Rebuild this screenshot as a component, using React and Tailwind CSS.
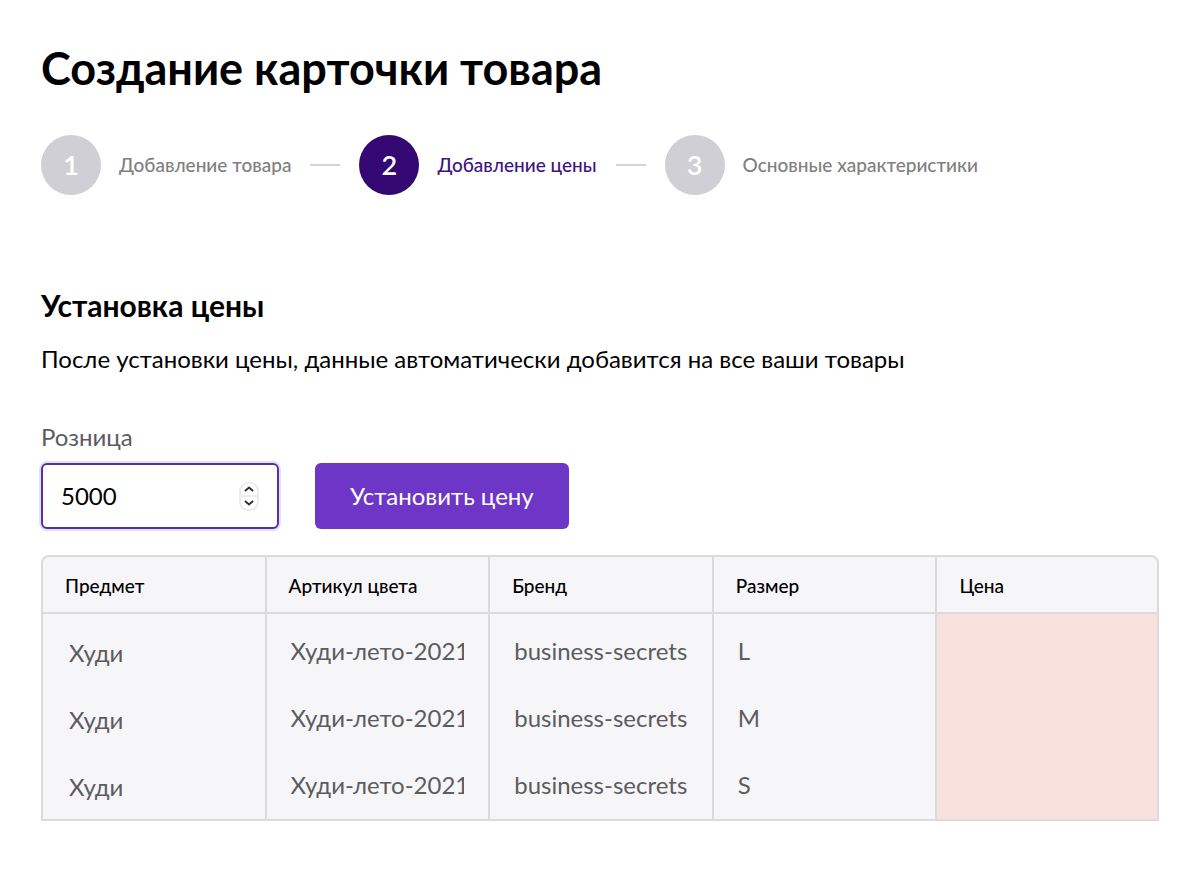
import { useState } from "react";
import clsx from "clsx";

const steps = ["Добавление товара", "Добавление цены", "Основные характеристики"];

const columns = ["Предмет", "Артикул цвета", "Бренд", "Размер", "Цена"];

const products = [
  { subject: "Худи", article: "Худи-лето-2021", brand: "business-secrets", size: "L" },
  { subject: "Худи", article: "Худи-лето-2021", brand: "business-secrets", size: "M" },
  { subject: "Худи", article: "Худи-лето-2021", brand: "business-secrets", size: "S" },
];

export default function App() {
  const [price, setPrice] = useState(5000);

  return (
    <main className="px-[41px] pt-10 pb-14 font-['Lato',sans-serif] text-black">
      <h1 className="text-[45px] leading-[56px] font-bold">Создание карточки товара</h1>

      <Steps active={1} />

      <h2 className="mt-[90px] text-[30px] leading-10 font-bold">Установка цены</h2>
      <p className="mt-[18px] text-2xl leading-8">
        После установки цены, данные автоматически добавится на все ваши товары
      </p>

      <form className="mt-[46px] flex items-end gap-9" onSubmit={(e) => e.preventDefault()}>
        <div className="w-[238px]">
          <label htmlFor="price" className="block text-2xl leading-8 text-[#5c5c5e]">
            Розница
          </label>
          <PriceInput value={price} onChange={setPrice} />
        </div>
        <button
          type="submit"
          className="h-[66px] rounded-md bg-[#6e36c6] px-[35px] text-2xl text-white"
        >
          Установить цену
        </button>
      </form>

      <ProductTable />
    </main>
  );
}

function Steps({ active }) {
  return (
    <ol className="mt-[39px] flex items-center">
      {steps.map((label, i) => (
        <li key={label} className="flex items-center">
          {i > 0 && <span className="mx-[19px] h-0.5 w-[30px] bg-[#d5d5d7]" />}
          <span
            className={clsx(
              "mr-[18px] flex size-[60px] items-center justify-center rounded-full text-[27px] font-semibold text-white",
              i === active ? "bg-[#330872]" : "bg-[#d0cfd6]"
            )}
          >
            {i + 1}
          </span>
          <span
            className={clsx(
              "text-[19px] font-medium",
              i === active ? "text-[#3d1480]" : "text-[#808080]"
            )}
          >
            {label}
          </span>
        </li>
      ))}
    </ol>
  );
}

function PriceInput({ value, onChange }) {
  return (
    <div className="mt-[10px] flex h-[66px] items-center rounded-md border-2 border-[#5b2f9b] bg-white px-[18px] ring-2 ring-[#e1e1fa]">
      <input
        id="price"
        type="number"
        value={value}
        onChange={(e) => onChange(Number(e.target.value))}
        className="w-full min-w-0 flex-1 text-2xl outline-none [appearance:textfield]"
      />
      <div className="flex h-[29px] w-5 flex-col overflow-hidden rounded-[9px] border-2 border-[#ececee]">
        <button
          type="button"
          aria-label="Увеличить"
          onClick={() => onChange(value + 1)}
          className="flex flex-1 items-center justify-center border-b-2 border-[#ececee]"
        >
          <svg viewBox="0 0 10 6" className="w-[10px]" fill="none" stroke="#333" strokeWidth="2">
            <path d="M1 5l4-3.5L9 5" />
          </svg>
        </button>
        <button
          type="button"
          aria-label="Уменьшить"
          onClick={() => onChange(value - 1)}
          className="flex flex-1 items-center justify-center"
        >
          <svg viewBox="0 0 10 6" className="w-[10px]" fill="none" stroke="#333" strokeWidth="2">
            <path d="M1 1l4 3.5L9 1" />
          </svg>
        </button>
      </div>
    </div>
  );
}

function ProductTable() {
  return (
    <table className="mt-[26px] w-full table-fixed border-separate border-spacing-0 text-left">
      <thead>
        <tr className="h-[59px]">
          {columns.map((name) => (
            <th
              key={name}
              className="border-y-2 border-l-2 border-[#dbdbdd] bg-[#f6f6f9] px-[22px] pt-1 text-[19px] font-medium first:rounded-tl-lg last:rounded-tr-lg last:border-r-2"
            >
              {name}
            </th>
          ))}
        </tr>
      </thead>
      <tbody className="text-2xl leading-8 text-[#5c5c5e]">
        {products.map((item, i) => (
          <Row key={item.size} item={item} last={i === products.length - 1} />
        ))}
      </tbody>
    </table>
  );
}

function Row({ item, last }) {
  const cell = clsx("border-l-2 border-[#dbdbdd] align-top", last && "border-b-2");

  return (
    <tr className={last ? "h-[73px]" : "h-[67px]"}>
      <td className={clsx(cell, "bg-[#f6f6f9] px-[26px] pt-[23px]")}>{item.subject}</td>
      {[item.article, item.brand, item.size].map((text) => (
        <td key={text} className={clsx(cell, "bg-[#f6f6f9] px-6 pt-[21px]")}>
          <div className="overflow-hidden whitespace-nowrap">{text}</div>
        </td>
      ))}
      <td className={clsx(cell, "border-r-2 bg-[#f8e1dd]")} />
    </tr>
  );
}
